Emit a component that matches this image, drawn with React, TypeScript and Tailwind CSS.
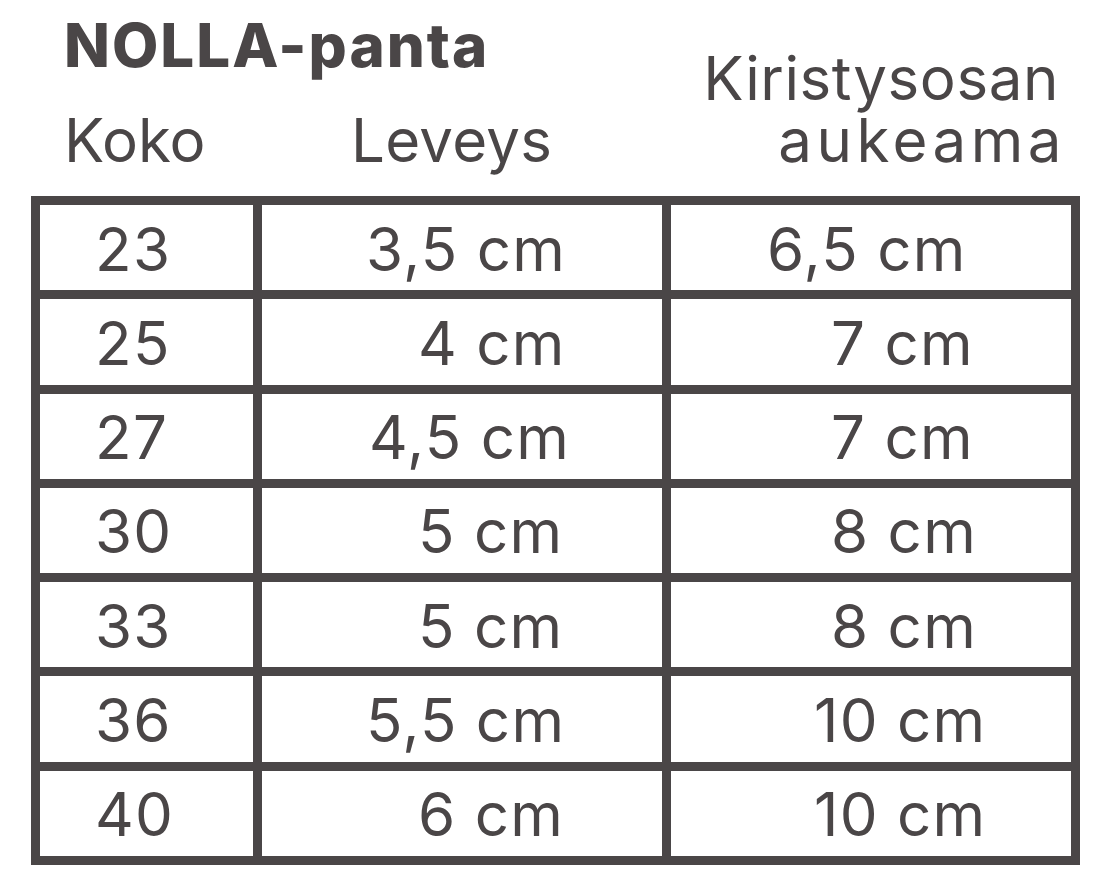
import React from 'react';

// --- DATA: size table rows (left offsets tuned to the printed chart) ---
const rows = [
  { size: '23', width: '3,5 cm', widthPad: 'pl-[104px]', opening: '6,5 cm', openPad: 'pl-[96px]' },
  { size: '25', width: '4 cm', widthPad: 'pl-[156px]', opening: '7 cm', openPad: 'pl-[160px]' },
  { size: '27', width: '4,5 cm', widthPad: 'pl-[107px]', opening: '7 cm', openPad: 'pl-[160px]' },
  { size: '30', width: '5 cm', widthPad: 'pl-[156px]', opening: '8 cm', openPad: 'pl-[160px]' },
  { size: '33', width: '5 cm', widthPad: 'pl-[156px]', opening: '8 cm', openPad: 'pl-[160px]' },
  { size: '36', width: '5,5 cm', widthPad: 'pl-[104px]', opening: '10 cm', openPad: 'pl-[143px]' },
  { size: '40', width: '6 cm', widthPad: 'pl-[156px]', opening: '10 cm', openPad: 'pl-[143px]' },
];

const Header: React.FC = () => (
  <div className="flex items-end justify-between pt-[15px] pr-[50px]">
    <div className="flex flex-col pl-[64px]">
      <h1 className="text-[60px] leading-[60px] font-extrabold tracking-[2px]">NOLLA-panta</h1>
      <div className="flex mt-[34px] text-[60px] leading-[62px]">
        <span className="w-[287px]">Koko</span>
        <span className="tracking-[0.3px]">Leveys</span>
      </div>
    </div>
    <div className="text-right text-[60px] leading-[62px]">
      <div className="tracking-[0.6px]">Kiristysosan</div>
      <div className="tracking-[4.5px] mr-[-7px]">aukeama</div>
    </div>
  </div>
);

const SizeTable: React.FC = () => (
  <div className="ml-[31px] mt-[25px] w-[1049px] h-[669px] bg-[#4a4647] p-[9px] grid grid-cols-[213px_400px_400px] grid-rows-7 gap-[9px] tracking-[1.3px]">
    {rows.map((r) => (
      <React.Fragment key={r.size}>
        <div className="bg-white flex items-center pl-[55px] pt-[2px]">{r.size}</div>
        <div className={`bg-white flex items-center pt-[2px] ${r.widthPad}`}>{r.width}</div>
        <div className={`bg-white flex items-center pt-[2px] ${r.openPad}`}>{r.opening}</div>
      </React.Fragment>
    ))}
  </div>
);

export default function App() {
  return (
    <div
      className="w-[1109px] h-[883px] bg-white text-[#4a4647] text-[60px] leading-none overflow-hidden"
      style={{ fontFamily: 'Inter, "Noto Sans", sans-serif' }}
    >
      <Header />
      <SizeTable />
    </div>
  );
}
